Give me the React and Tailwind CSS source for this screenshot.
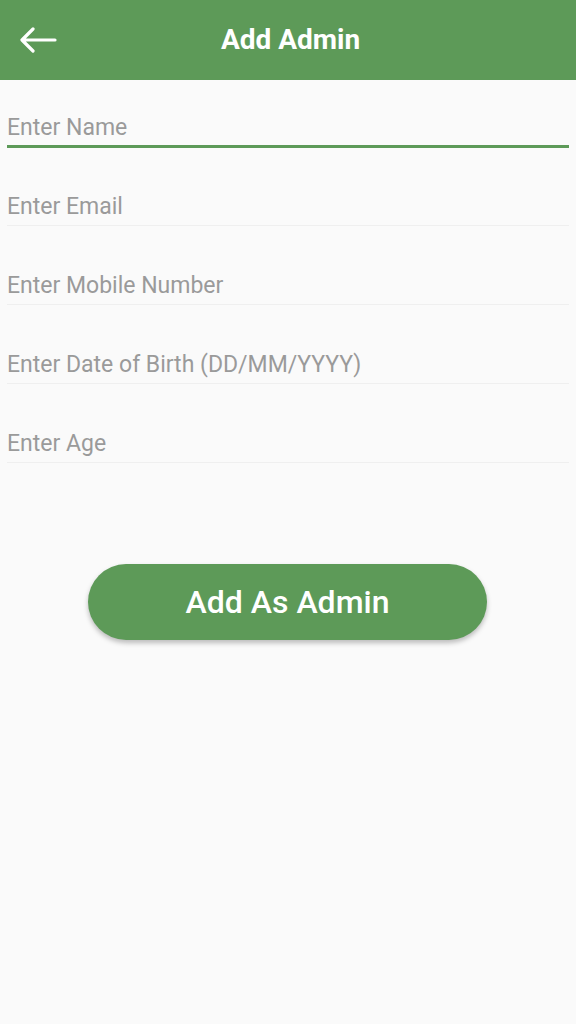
const fields = [
  "Enter Name",
  "Enter Email",
  "Enter Mobile Number",
  "Enter Date of Birth (DD/MM/YYYY)",
  "Enter Age",
];

const App = () => {
  return (
    <div className="min-h-[1024px] w-full bg-[#fafafa] font-['Roboto',sans-serif]">
      {/* Toolbar */}
      <div className="relative flex h-20 items-center justify-center bg-[#5d9a58]">
        <button className="absolute left-[18px] top-[26px] flex h-7 w-10 items-center justify-center">
          <svg width="38" height="26" viewBox="0 0 38 26" fill="none">
            <path
              d="M36 13H4M14 2L3 13l11 11"
              stroke="#fff"
              strokeWidth="3.2"
              strokeLinecap="round"
              strokeLinejoin="round"
            />
          </svg>
        </button>
        <h1 className="ml-[5px] text-[28px] font-bold text-white">Add Admin</h1>
      </div>

      {/* Form */}
      <div className="flex flex-col px-[7px] pt-[34px]">
        {fields.map((label, i) => (
          <div key={label} className="h-[79px]">
            <div className="text-[23px] leading-[28px] text-[#9a9a9a]">{label}</div>
            <div
              className={
                i === 0
                  ? "mt-[3px] h-[3px] w-full bg-[#5d9a58]"
                  : "mt-[4px] h-px w-full bg-[#efefef]"
              }
            />
          </div>
        ))}
      </div>

      {/* Button */}
      <div className="flex justify-center pt-[55px]">
        <button className="ml-[-1px] flex h-[76px] w-[399px] items-center justify-center rounded-full bg-[#5d9a58] text-[32px] font-medium text-white shadow-[0_3px_5px_rgba(0,0,0,0.25)]">
          Add As Admin
        </button>
      </div>
    </div>
  );
};

export default App;
